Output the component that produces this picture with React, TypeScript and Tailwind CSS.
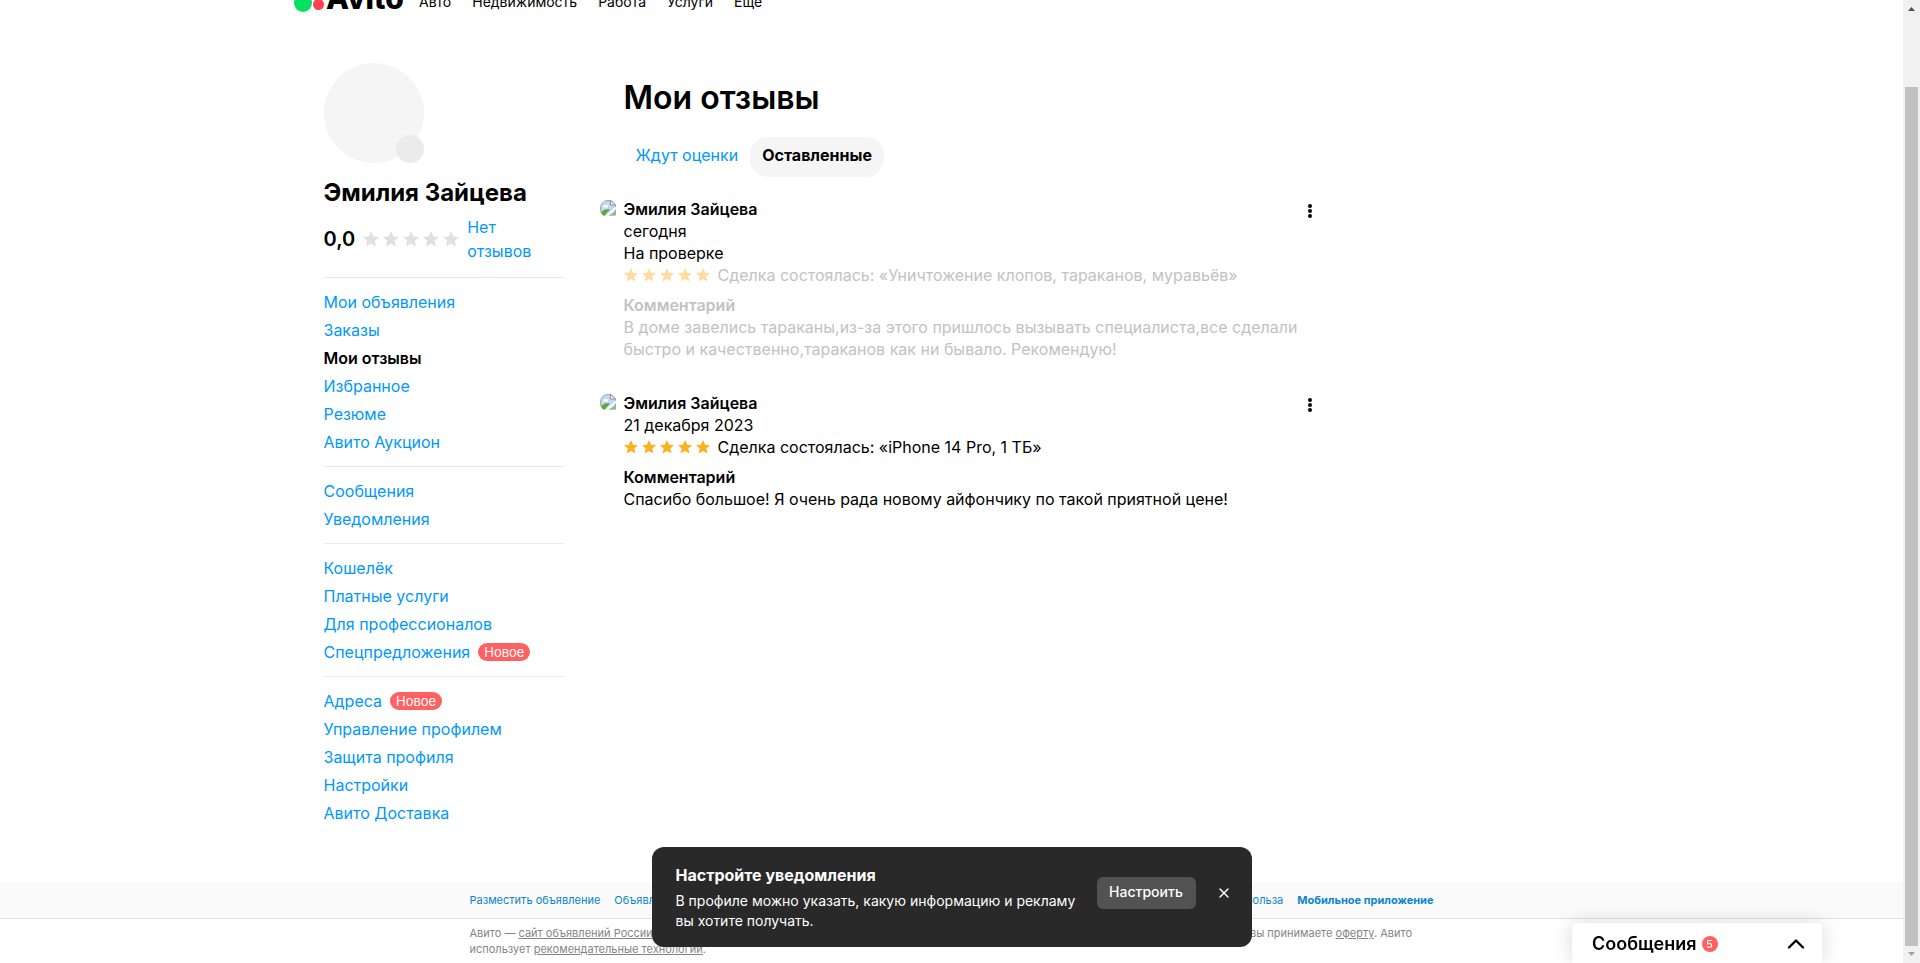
import React, { useState } from 'react';
import { ChevronUp, X } from 'lucide-react';

interface MenuItem {
  label: string;
  isNew?: boolean;
  active?: boolean;
}

interface Review {
  id: number;
  author: string;
  date: string;
  status?: string;
  deal: string;
  comment: string;
}

const CATEGORIES = ['Авто', 'Недвижимость', 'Работа', 'Услуги', 'Ещё'];

const MENU: MenuItem[][] = [
  [
    { label: 'Мои объявления' },
    { label: 'Заказы' },
    { label: 'Мои отзывы', active: true },
    { label: 'Избранное' },
    { label: 'Резюме' },
    { label: 'Авито Аукцион' },
  ],
  [{ label: 'Сообщения' }, { label: 'Уведомления' }],
  [
    { label: 'Кошелёк' },
    { label: 'Платные услуги' },
    { label: 'Для профессионалов' },
    { label: 'Спецпредложения', isNew: true },
  ],
  [
    { label: 'Адреса', isNew: true },
    { label: 'Управление профилем' },
    { label: 'Защита профиля' },
    { label: 'Настройки' },
    { label: 'Авито Доставка' },
  ],
];

const REVIEWS: Review[] = [
  {
    id: 1,
    author: 'Эмилия Зайцева',
    date: 'сегодня',
    status: 'На проверке',
    deal: 'Сделка состоялась: «Уничтожение клопов, тараканов, муравьёв»',
    comment:
      'В доме завелись тараканы,из-за этого пришлось вызывать специалиста,все сделали быстро и качественно,тараканов как ни бывало. Рекомендую!',
  },
  {
    id: 2,
    author: 'Эмилия Зайцева',
    date: '21 декабря 2023',
    deal: 'Сделка состоялась: «iPhone 14 Pro, 1 ТБ»',
    comment: 'Спасибо большое! Я очень рада новому айфончику по такой приятной цене!',
  },
];

const Star: React.FC<{ className: string }> = ({ className }) => (
  <svg className={className} viewBox="0.5 0.5 15 15" fill="currentColor" aria-hidden="true">
    <path d="M8 .6 10.300 5.700 15.500 6.100 11.500 9.700 12.800 15 8 12.200 3.200 15 4.500 9.700.500 6.100 5.700 5.700Z" />
  </svg>
);

const BrokenImage: React.FC = () => (
  <svg className="mt-[2px] h-4 w-4 shrink-0" viewBox="0 0 16 16" aria-hidden="true">
    <path d="M7 .5h4l4.500 4.500v10H3.500A7 7 0 0 1 .5 8 7.500 7.500 0 0 1 7 .5z" fill="#c3d6f5" stroke="#a6a6a6" />
    <path d="M10.500.5V5h5z" fill="#fff" stroke="#8f8f8f" />
    <path d="M3 7.500C2.500 6 4 5 5 5.500 6 4 8.500 5 8 7.500z" fill="#fff" />
    <path d="M1 12.500C3 9.500 7 8.500 10 9.500L4.500 15.500H3z" fill="#57a938" />
    <path d="M5 16 16 6.500V9l-8 7z" fill="#fff" />
    <path d="M10 15.500 15.500 11v4.500z" fill="#8fbf7f" />
  </svg>
);

const Header: React.FC = () => (
  <header className="mx-auto -mt-3 flex h-6 w-full max-w-[1315px] items-end">
    <a href="#" className="flex h-6 w-[109px] shrink-0 items-end">
      <svg className="h-6 w-[109px] overflow-visible" viewBox="0 0 109 24">
        <circle cx="9" cy="15" r="9" fill="#04e061" />
        <circle cx="24.500" cy="16.500" r="5.500" fill="#ff4053" />
        <text x="32" y="21" fontSize="30" fontWeight="800" fontFamily="Inter, sans-serif">Avito</text>
      </svg>
    </a>
    <nav className="ml-4 flex gap-[21px] text-sm leading-5">
      {CATEGORIES.map((c) => (
        <a key={c} href="#">{c}</a>
      ))}
    </nav>
  </header>
);

const Sidebar: React.FC = () => (
  <aside className="w-60 shrink-0">
    <div className="relative h-[100px] w-[100px] rounded-full bg-[#f5f5f5]">
      <button type="button" aria-label="Изменить фото" className="absolute right-0 bottom-0 h-7 w-7 rounded-full bg-[#ebebeb]" />
    </div>
    <h2 className="mt-3 text-2xl leading-9 font-bold whitespace-nowrap">Эмилия Зайцева</h2>
    <div className="mt-1 flex items-center">
      <span className="text-xl font-semibold">0,0</span>
      <span className="ml-2 flex gap-1">
        {[1, 2, 3, 4, 5].map((n) => (
          <Star key={n} className="h-4 w-4 text-[#e0e0e0]" />
        ))}
      </span>
      <a href="#" className="ml-2 w-20 leading-6 text-[#0099f7]">Нет отзывов</a>
    </div>
    <nav className="mt-[14px]">
      {MENU.map((group, i) => (
        <ul key={i} className="border-t border-[#ebebeb] py-[10px]">
          {group.map((item) => (
            <li key={item.label} className="flex h-7 items-center">
              <a href="#" className={item.active ? 'font-semibold' : 'text-[#0099f7]'}>{item.label}</a>
              {item.isNew && (
                <span className="ml-2 rounded-full bg-[#ff6163] px-[6px] text-[13px] leading-[18px] text-white">Новое</span>
              )}
            </li>
          ))}
        </ul>
      ))}
    </nav>
  </aside>
);

const ReviewCard: React.FC<{ review: Review }> = ({ review }) => {
  const pending = Boolean(review.status);

  return (
    <article className="flex items-start leading-[22px]">
      <BrokenImage />
      <div className="ml-2 min-w-0 flex-1">
        <h3 className="font-semibold">{review.author}</h3>
        <p>{review.date}</p>
        {review.status && <p>{review.status}</p>}
        <div className={pending ? 'text-[#c2c2c2]' : ''}>
          <div className="flex items-center">
            <span className="flex gap-1">
              {[1, 2, 3, 4, 5].map((n) => (
                <Star key={n} className={pending ? 'h-[14px] w-[14px] text-[#ffdca0]' : 'h-[14px] w-[14px] text-[#ffb021]'} />
              ))}
            </span>
            <span className="ml-2">{review.deal}</span>
          </div>
          <h4 className="mt-2 font-semibold">Комментарий</h4>
          <p>{review.comment}</p>
        </div>
      </div>
      <button type="button" aria-label="Действия с отзывом" className="mt-[5px] mr-1 h-4 w-4">
        <svg className="h-4 w-4" viewBox="0 0 16 16">
          <circle cx="8" cy="3" r="2" />
          <circle cx="8" cy="8" r="2" />
          <circle cx="8" cy="13" r="2" />
        </svg>
      </button>
    </article>
  );
};

const Footer: React.FC = () => (
  <footer>
    <div className="border-b border-[#e0e0e0] bg-[#fafafa]">
      <div className="mx-auto flex h-9 w-full max-w-[964px] items-center justify-between text-[11px] whitespace-nowrap text-[#0a85d1]">
        <div className="flex gap-[14px]">
          <a href="#">Разместить объявление</a>
          <a href="#">Объявления</a>
        </div>
        <div className="flex gap-[14px]">
          <a href="#">Польза</a>
          <a href="#" className="font-bold">Мобильное приложение</a>
        </div>
      </div>
    </div>
    <p className="mx-auto w-full max-w-[964px] py-[6px] text-[11px] leading-4 text-[#858585]">
      Авито — <a href="#" className="underline">сайт объявлений России</a>. © ООО «КЕХ еКоммерц» 2023.{' '}
      <a href="#" className="underline">Правила Авито</a>. <a href="#" className="underline">Политика конфиденциальности</a>. Оплачивая услуги на Авито, вы
      принимаете <a href="#" className="underline">оферту</a>. Авито
      <br />
      использует <a href="#" className="underline">рекомендательные технологии</a>.
    </p>
  </footer>
);

const Toast: React.FC<{ onClose: () => void }> = ({ onClose }) => (
  <div className="fixed right-[17px] bottom-4 left-0 mx-auto flex w-[600px] items-start rounded-xl bg-[#292929] py-4 pr-5 pl-6 text-white">
    <div className="flex-1">
      <h2 className="leading-6 font-bold">Настройте уведомления</h2>
      <p className="mt-1 text-sm leading-5">
        В профиле можно указать, какую информацию и рекламу вы хотите получать.
      </p>
    </div>
    <div className="mt-[14px] ml-4 flex items-center">
      <button type="button" className="h-8 w-[99px] rounded-md bg-[#525252] pb-[2px] text-sm font-medium">Настроить</button>
      <button type="button" aria-label="Закрыть" onClick={onClose} className="ml-5">
        <X className="h-4 w-4" strokeWidth={2} />
      </button>
    </div>
  </div>
);

const Messenger: React.FC = () => (
  <button
    type="button"
    className="fixed right-[98px] bottom-0 flex h-10 w-[250px] items-center rounded-t bg-white px-5 pt-[2px] shadow-[0_0_20px_rgba(0,0,0,0.15)]"
  >
    <span className="text-lg font-semibold">Сообщения</span>
    <span className="ml-[5px] flex h-4 w-4 items-center justify-center rounded-full bg-[#ff6163] text-[11px] font-medium text-white">5</span>
    <ChevronUp className="-mr-2 ml-auto h-7 w-7" strokeWidth={2} />
  </button>
);

const ScrollRail: React.FC = () => (
  <div className="sticky top-0 flex h-screen w-[17px] shrink-0 flex-col items-center bg-[#f1f1f1]" aria-hidden="true">
    <svg className="h-[17px] w-[17px] shrink-0" viewBox="0 0 17 17">
      <path d="M5 11 8.500 7 12 11z" fill="#505050" />
    </svg>
    <div className="mt-[70px] w-[13px] flex-1 bg-[#c1c1c1]" />
    <svg className="h-[17px] w-[17px] shrink-0" viewBox="0 0 17 17">
      <path d="M5 6 8.500 10 12 6z" fill="#a3a3a3" />
    </svg>
  </div>
);

const App: React.FC = () => {
  const [tab, setTab] = useState<'waiting' | 'left'>('left');
  const [toastOpen, setToastOpen] = useState(true);

  const tabs = [
    { id: 'waiting' as const, label: 'Ждут оценки' },
    { id: 'left' as const, label: 'Оставленные' },
  ];

  return (
    <div className="flex bg-white font-['Inter','Noto_Sans',sans-serif] text-base text-black">
      <div className="flex min-h-screen min-w-0 flex-1 flex-col overflow-hidden">
        <Header />
        <div className="mx-auto mt-[51px] flex w-full max-w-[1256px] flex-1 gap-9">
          <Sidebar />
          <main className="w-full max-w-[722px] pt-[15px]">
            <h1 className="pl-6 text-[32px] leading-10 font-semibold">Мои отзывы</h1>
            <div className="mt-[19px] flex pl-6">
              {tabs.map((t) => (
                <button
                  key={t.id}
                  type="button"
                  onClick={() => setTab(t.id)}
                  className={`h-10 rounded-[18px] px-3 pb-1 ${tab === t.id ? 'bg-[#f5f5f5] font-bold' : 'text-[#0099f7]'}`}
                >
                  {t.label}
                </button>
              ))}
            </div>
            <div className="mt-[21px] flex flex-col gap-8">
              {REVIEWS.map((r) => (
                <ReviewCard key={r.id} review={r} />
              ))}
            </div>
          </main>
        </div>
        <Footer />
      </div>
      <ScrollRail />
      <Messenger />
      {toastOpen && <Toast onClose={() => setToastOpen(false)} />}
    </div>
  );
};

export default App;
